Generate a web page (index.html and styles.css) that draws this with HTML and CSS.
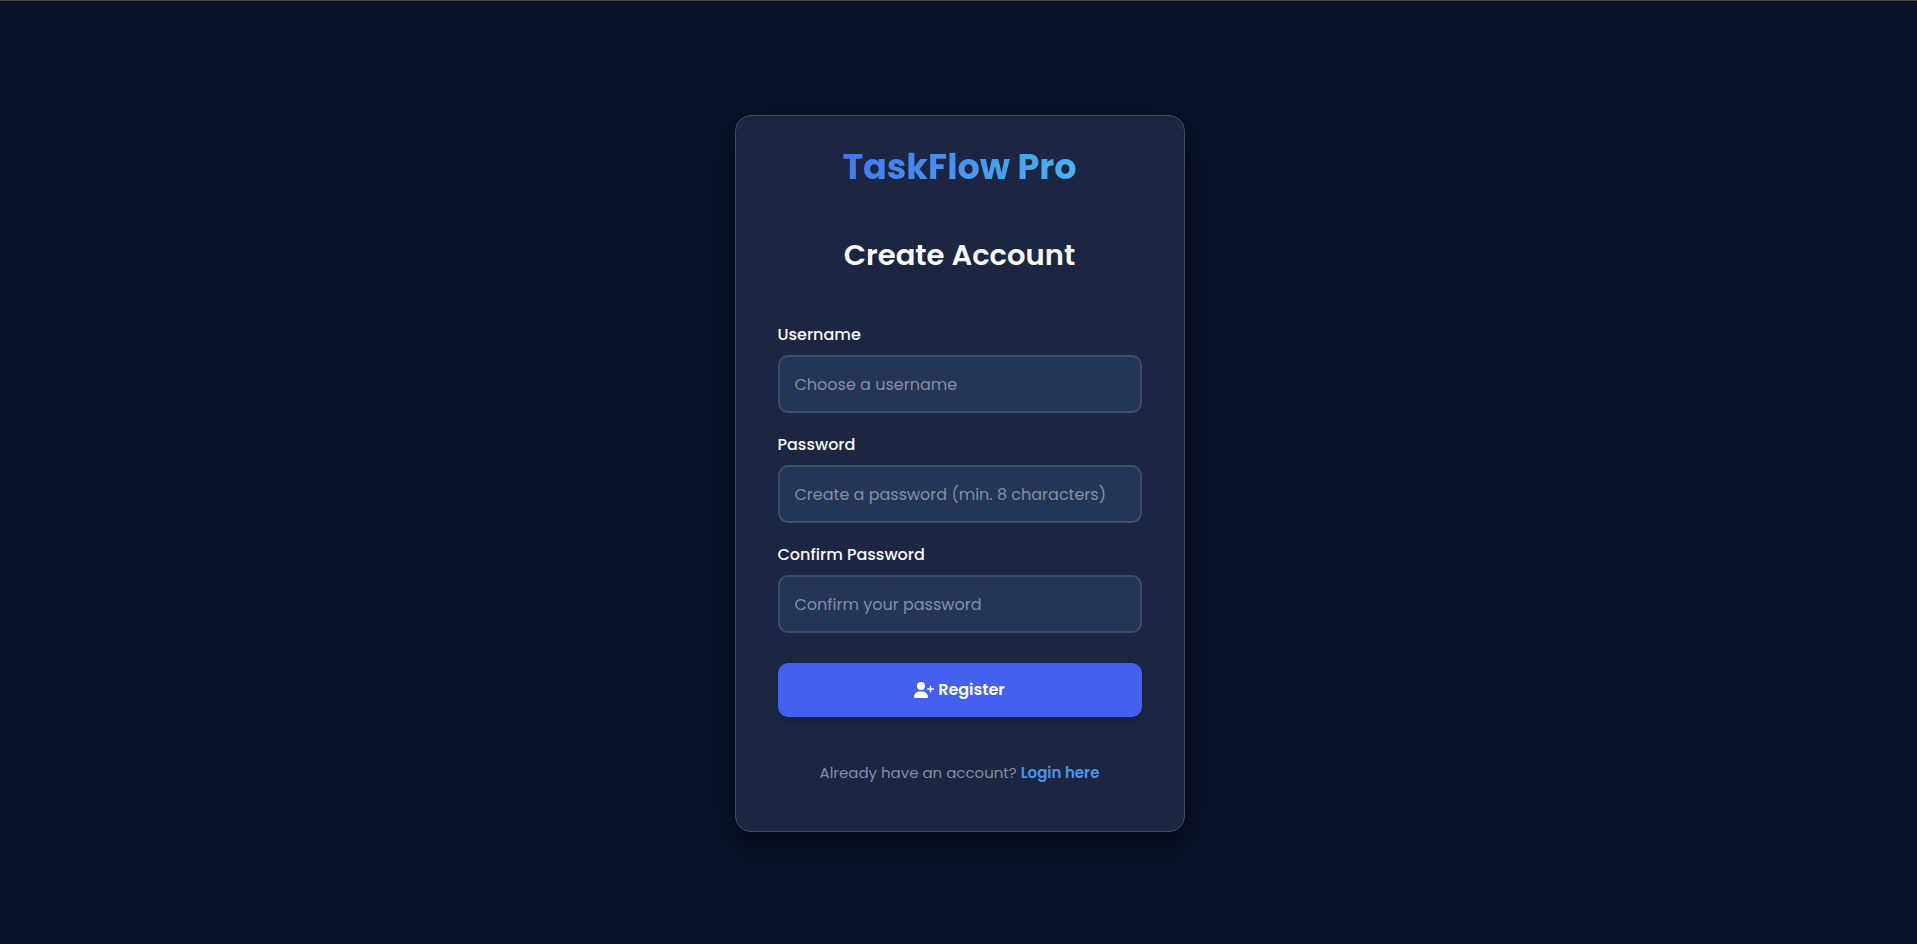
FILE: index.html
```html
<!DOCTYPE html>
<html lang="en">
<head>
<meta charset="utf-8">
<meta name="viewport" content="width=device-width, initial-scale=1">
<title>TaskFlow Pro - Register</title>
<link rel="stylesheet" href="styles.css">
</head>
<body class="page">
<main class="card">
  <div class="brand">TaskFlow Pro</div>
  <h1 class="title">Create Account</h1>
  <form class="form">
    <div class="field">
      <label class="label" for="username">Username</label>
      <input class="input" id="username" type="text" placeholder="Choose a username">
    </div>
    <div class="field">
      <label class="label" for="password">Password</label>
      <input class="input" id="password" type="password" placeholder="Create a password (min. 8 characters)">
    </div>
    <div class="field">
      <label class="label" for="confirm">Confirm Password</label>
      <input class="input" id="confirm" type="password" placeholder="Confirm your password">
    </div>
    <button class="button" type="submit">
      <svg class="icon" viewBox="0 0 640 512" aria-hidden="true"><path fill="currentColor" d="M96 128a128 128 0 1 1 256 0A128 128 0 1 1 96 128zM0 482.300C0 383.800 79.800 304 178.300 304h91.400C368.200 304 448 383.800 448 482.300c0 16.400-13.300 29.700-29.700 29.700H29.700C13.300 512 0 498.700 0 482.300zM504 312V248H440c-13.300 0-24-10.700-24-24s10.700-24 24-24h64V136c0-13.300 10.700-24 24-24s24 10.700 24 24v64h64c13.300 0 24 10.700 24 24s-10.700 24-24 24H552v64c0 13.300-10.700 24-24 24s-24-10.700-24-24z"/></svg>
      Register
    </button>
  </form>
  <p class="footer">Already have an account? <a class="link" href="#login">Login here</a></p>
</main>
</body>
</html>
```
FILE: styles.css
```css
*, *::before, *::after { box-sizing: border-box; }

.page {
  margin: 0;
  min-height: 100vh;
  padding: 22px 20px 20px 22px;
  display: flex;
  align-items: center;
  justify-content: center;
  border-top: 1px solid #444444;
  background: #091229;
  color: #f8f9fa;
  font-family: Poppins, Inter, sans-serif;
  font-size: 16px;
  line-height: 24px;
}

.card {
  width: 100%;
  max-width: 450px;
  padding: 24px 42px 46px;
  border: 1px solid #3a506b;
  border-radius: 16px;
  background: #1c2541;
  box-shadow: 0 12px 30px rgba(0, 0, 0, 0.5);
}

.brand {
  margin-bottom: 39px;
  background: linear-gradient(135deg, #4361ee, #4cc9f0);
  -webkit-background-clip: text;
  background-clip: text;
  color: transparent;
  text-align: center;
  font-size: 35px;
  font-weight: 700;
  line-height: 54px;
}

.title {
  margin: 0 0 46px;
  text-align: center;
  font-size: 29px;
  font-weight: 600;
  line-height: 44px;
}

.form { display: flex; flex-direction: column; gap: 20px; }

.field { display: flex; flex-direction: column; gap: 8px; }

.label { font-weight: 500; }

.input {
  width: 100%;
  height: 58px;
  padding: 0 15px;
  border: 2px solid #3a506b;
  border-radius: 10px;
  background: #253555;
  color: #f8f9fa;
  font: inherit;
}

.input::placeholder { color: #8390a8; opacity: 1; }

.button {
  display: flex;
  align-items: center;
  justify-content: center;
  gap: 4px;
  margin-top: 10px;
  padding: 15px;
  border: 0;
  border-radius: 10px;
  background: #4361ee;
  box-shadow: 0 4px 6px rgba(0, 0, 0, 0.1);
  color: #ffffff;
  font: inherit;
  font-weight: 600;
}

.icon { width: 20px; height: 16px; }

.footer {
  margin: 44px 0 0;
  text-align: center;
  color: #8390a8;
  font-size: 15px;
}

.link { color: #4895ef; font-weight: 600; text-decoration: none; }
```
